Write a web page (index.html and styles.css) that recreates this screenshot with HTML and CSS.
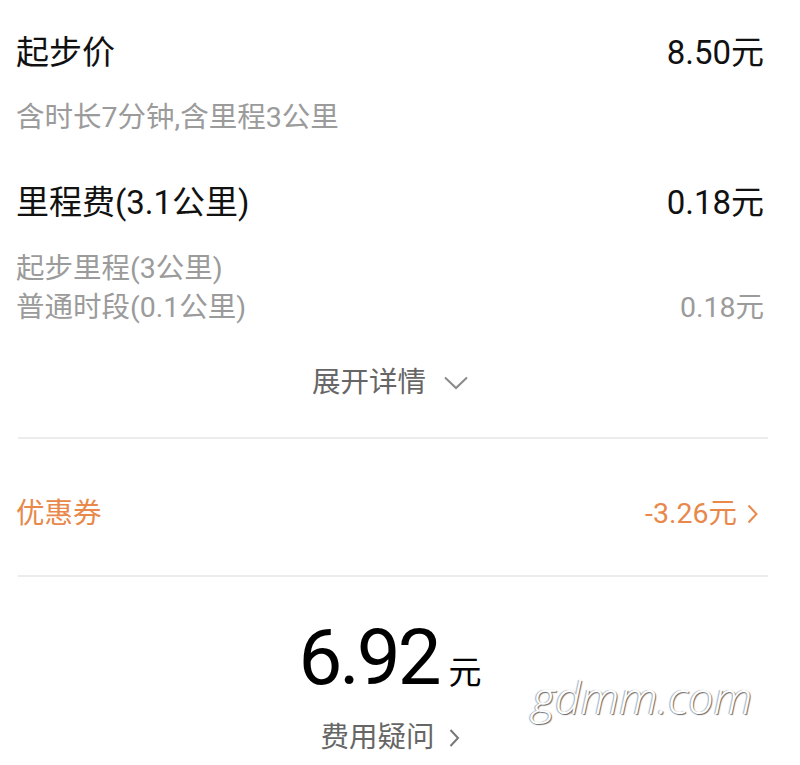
FILE: index.html
```html
<!DOCTYPE html>
<html lang="zh-CN">
<head>
    <meta charset="UTF-8">
    <meta name="viewport" content="width=device-width, initial-scale=1.0">
    <title>费用明细</title>
    <link rel="stylesheet" href="styles.css">
</head>
<body>
    <div class="fee-page">
        <!-- 起步价 -->
        <div class="row main-row">
            <span>起步价</span>
            <span>8.50元</span>
        </div>
        <div class="sub-text first-sub">含时长7分钟,含里程3公里</div>

        <!-- 里程费 -->
        <div class="row main-row mileage">
            <span>里程费(3.1公里)</span>
            <span>0.18元</span>
        </div>
        <div class="sub-list">
            <div class="row sub-row">
                <span>起步里程(3公里)</span>
                <span></span>
            </div>
            <div class="row sub-row">
                <span>普通时段(0.1公里)</span>
                <span>0.18元</span>
            </div>
        </div>

        <div class="expand">
            <span>展开详情</span>
            <svg width="24" height="14" viewBox="0 0 24 14"><polyline points="1,1.5 12,12 23,1.5" fill="none" stroke="#8a8a8a" stroke-width="2"/></svg>
        </div>

        <div class="divider"></div>

        <!-- 优惠券 -->
        <div class="row coupon">
            <span>优惠券</span>
            <span class="coupon-value">-3.26元
                <svg width="11" height="20" viewBox="0 0 11 20"><polyline points="1.5,1.5 9.5,10 1.5,18.5" fill="none" stroke="#e8884a" stroke-width="2"/></svg>
            </span>
        </div>

        <div class="divider"></div>

        <!-- 合计 -->
        <div class="total">
            <span class="total-num">6.92</span><span class="total-unit">元</span>
        </div>
        <div class="question">
            <span>费用疑问</span>
            <svg width="11" height="20" viewBox="0 0 11 20"><polyline points="1.5,2 9,10 1.5,18" fill="none" stroke="#777" stroke-width="2"/></svg>
        </div>

        <div class="watermark">gdmm.com</div>
    </div>
</body>
</html>
```

FILE: styles.css
```css
body {
    margin: 0;
    padding: 0;
    background-color: #fff;
    font-family: Roboto, "Noto Sans CJK SC", sans-serif;
}
.fee-page {
    position: relative;
    padding: 33px 36px 0 16px;
    height: 732px;
    overflow: hidden;
}
.row {
    display: flex;
    justify-content: space-between;
    align-items: center;
}
.main-row {
    font-size: 33px;
    line-height: 40px;
    color: #111;
}
.mileage {
    margin-top: 47px;
}
.sub-text {
    font-size: 28.5px;
    line-height: 36px;
    color: #9b9b9b;
}
.first-sub {
    margin-top: 27px;
}
.sub-list {
    margin-top: 26px;
}
.sub-row {
    font-size: 28.5px;
    line-height: 39px;
    color: #9b9b9b;
}
.expand {
    margin-top: 38px;
    display: flex;
    justify-content: center;
    align-items: center;
    gap: 18px;
    font-size: 28.5px;
    line-height: 36px;
    color: #666;
}
.divider {
    height: 2px;
    background-color: #ececec;
    margin: 36px -4px 0 2px;
}
.coupon {
    margin-top: 57px;
    font-size: 28.5px;
    line-height: 36px;
    color: #e8884a;
}
.coupon-value {
    display: flex;
    align-items: center;
    gap: 10px;
    margin-right: 6px;
}
.coupon + .divider {
    margin-top: 43px;
}
.total {
    margin-top: 41px;
    text-align: center;
    color: #000;
}
.total-num {
    font-size: 78px;
    line-height: 80px;
    letter-spacing: -3px;
}
.total-unit {
    font-size: 33px;
    margin-left: 10px;
}
.question {
    margin-top: 22px;
    display: flex;
    justify-content: center;
    align-items: center;
    gap: 14px;
    font-size: 28.5px;
    line-height: 36px;
    color: #666;
}
.watermark {
    position: absolute;
    left: 532px;
    top: 666px;
    font-family: "Open Sans", sans-serif;
    font-style: italic;
    font-weight: 300;
    font-size: 45px;
    color: #fff;
    text-shadow: 1px 1px 1px #666, -1px 0 1px #aaa;
}
```
